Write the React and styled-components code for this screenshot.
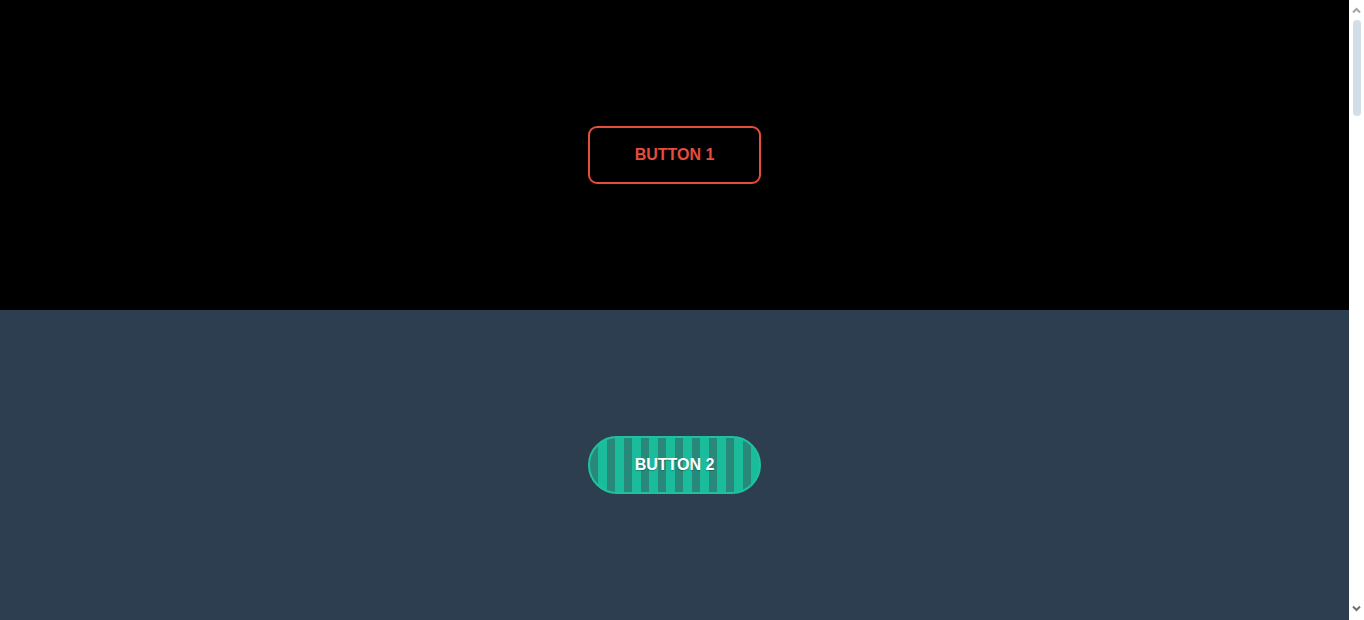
import React from "react";
import styled, { createGlobalStyle, css } from "styled-components";

const GlobalStyle = createGlobalStyle`
    html, body {
        margin: 0;
        padding: 0;
        overflow: hidden;
    }
    body {
        font-family: "Liberation Sans", Arial, sans-serif;
    }
`;

const Page = styled.div`
    width: calc(100% - 15px);
`;

const Section = styled.section`
    height: 310px;
    display: flex;
    align-items: center;
    justify-content: center;
    background: ${props => props.bg};
`;

const Button = styled.button`
    box-sizing: border-box;
    padding: 18px 45px;
    font-family: "Liberation Sans", Arial, sans-serif;
    font-size: 16px;
    font-weight: bold;
    line-height: 18px;
    text-transform: uppercase;
    cursor: pointer;

    ${props => props.variant === "outline" && css`
        background: transparent;
        color: #e74c3c;
        border: 2px solid #e74c3c;
        border-radius: 9px;
    `}

    ${props => props.variant === "stripes" && css`
        color: #fff;
        border: 2px solid #1fc29f;
        border-radius: 30px;
        text-shadow: 0 1px 1px rgba(0, 0, 0, 0.25);
        background: repeating-linear-gradient(
            90deg,
            #28897a 0 8px,
            #1abc9c 8px 17px
        );
    `}
`;

// browser scrollbar as it shows in the screenshot
const ScrollTrack = styled.div`
    position: fixed;
    top: 0;
    right: 0;
    bottom: 0;
    width: 15px;
    background: #fff;
    display: flex;
    flex-direction: column;
    align-items: center;
`;

const Arrow = styled.svg`
    flex: none;
    display: block;
    margin: ${props => props.down ? "auto 0 4px" : "3px 0 0"};
`;

const Thumb = styled.div`
    width: 8px;
    height: 96px;
    margin: 2px 0 0 1px;
    border-radius: 4px;
    background: #d3dde6;
`;

const sections = [
    { bg: "#000", variant: "outline" },
    { bg: "#2c3e50", variant: "stripes" },
];

const App = () => (
    <>
        <GlobalStyle />
        <Page>
            {sections.map((s, i) => (
                <Section key={i} bg={s.bg}>
                    <Button variant={s.variant}>Button {i + 1}</Button>
                </Section>
            ))}
        </Page>
        <ScrollTrack>
            <Arrow width="15" height="15" viewBox="0 0 15 15">
                <path d="M4 9.5 7.5 6 11 9.5" fill="none" stroke="#a3a3a3" strokeWidth="2" />
            </Arrow>
            <Thumb />
            <Arrow down width="15" height="15" viewBox="0 0 15 15">
                <path d="M4 5.5 7.5 9 11 5.5" fill="none" stroke="#707070" strokeWidth="2" />
            </Arrow>
        </ScrollTrack>
    </>
);

export default App;
